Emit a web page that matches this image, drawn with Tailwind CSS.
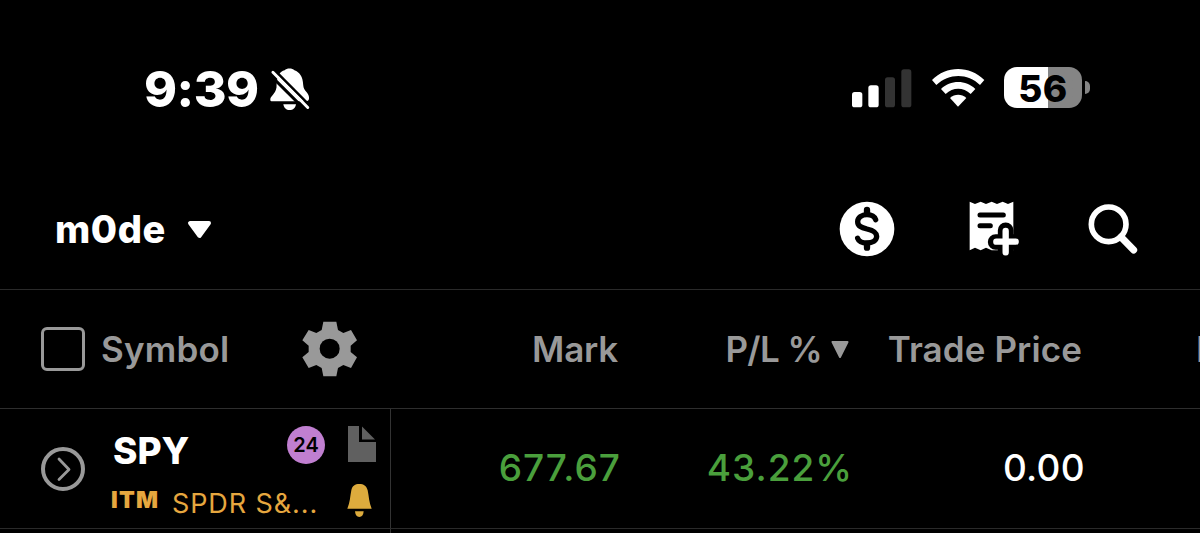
<!DOCTYPE html>
<html lang="en">
<head>
    <meta charset="UTF-8" />
    <meta name="viewport" content="width=device-width, initial-scale=1.0">
    <title>Watchlist</title>
    <script src="https://cdn.jsdelivr.net/npm/@tailwindcss/browser@4"></script>
    <style>
        body { font-family: 'Inter', 'Liberation Sans', sans-serif; }
    </style>
</head>
<body class="bg-black text-white w-[1200px] h-[533px] overflow-hidden">

    <!-- Status Bar -->
    <div class="h-[169px] pt-[9px] pl-[144px] pr-[110px] flex items-center justify-between">
        <div class="flex items-center">
            <span class="w-[125px] text-[50px] leading-none font-extrabold whitespace-nowrap tracking-[-0.5px]">9:39</span>
            <svg class="w-[43px] h-[43px]" viewBox="414 36 132 132" fill="#fff">
                <path d="M418 134C417 122 433 118 437 96C437 60 448 46 462 43C468 36 486 36 492 43C508 49 518 62 519 88C520 108 537 110 537 128C537 135 533 138 528 138H424C420 138 418 137 418 134Z" />
                <path d="M458 147H497C495 158 488 165 477 165C467 165 460 158 458 147Z" />
                <path d="M417 57L530 170" stroke="#000" stroke-width="9" />
                <path d="M431 43L548 160" stroke="#000" stroke-width="8" />
                <path d="M426 49L533 157" stroke="#fff" stroke-width="9" stroke-linecap="round" />
            </svg>
        </div>
        <div class="flex items-center">
            <svg class="w-[60px] h-[39px] mb-[2px] mr-[20px]" viewBox="35 41 180 117">
                <g fill="#fff">
                    <rect x="35" y="110" width="31" height="46" rx="8" />
                    <rect x="84" y="90" width="31" height="66" rx="8" />
                </g>
                <g fill="#333">
                    <rect x="134" y="66" width="30" height="90" rx="8" />
                    <rect x="183" y="42" width="30" height="114" rx="8" />
                </g>
            </svg>
            <svg class="w-[54px] h-[40px] mb-[3px] mr-[18px]" viewBox="275 38 162 120" fill="#fff">
                <path d="M275 74C318 30 388 30 432 74L419 89C382 53 326 53 288 89Z" />
                <path d="M302 101C330 73 377 73 405 101L391 116C369 95 338 95 316 116Z" />
                <path d="M329 128C343 115 364 115 378 128L353 154Z" />
            </svg>
            <div class="flex items-center">
                <div class="w-[78px] h-[41px] mb-[3px] pt-[1px] rounded-[13px] bg-linear-to-r from-white from-[56%] to-[#858585] to-[56%] text-black text-[37px] leading-none font-extrabold tracking-[0.5px] flex items-center justify-center">56</div>
                <div class="w-[5px] h-[13px] ml-[3px] mb-[3px] rounded-r-full bg-[#858585]"></div>
            </div>
        </div>
    </div>

    <!-- Account Header -->
    <header class="h-[121px] border-b border-[#2a2a2a] pl-[55px] pr-[62px] flex items-center justify-between">
        <div class="flex items-center">
            <span class="w-[132px] text-[38px] leading-none font-extrabold whitespace-nowrap tracking-[0.6px]">m0de</span>
            <svg class="w-[25px] h-[19px]" viewBox="0 0 25 19" fill="#fff" stroke="#fff" stroke-width="4" stroke-linejoin="round"><path d="M3 3H22L12.5 16Z" /></svg>
        </div>
        <div class="flex items-center">
            <svg class="w-[56px] h-[56px] mr-[74px]" viewBox="58 34 168 168" fill="none" stroke="#000" stroke-linecap="round">
                <circle cx="142" cy="118" r="82" fill="#fff" stroke="none" />
                <path stroke-width="16" d="M168 90C164 79 154 75 142 75C126 75 114 84 114 96C114 110 126 114 142 118C160 122 171 127 171 140C171 153 158 160 142 160C128 160 117 154 114 146" />
                <path stroke-width="19" d="M142 61V72M142 163V174" />
            </svg>
            <svg class="w-[51px] h-[56px] mr-[68px]" viewBox="448 34 153 168">
                <path fill="#fff" d="M450 36L466 43L483 36L499 43L516 36L532 43L549 36L565 43L581 36V182H516L499 174L483 182L466 174L450 182Z" />
                <path stroke="#000" stroke-width="15" stroke-linecap="round" d="M481 76H551M481 108H512" />
                <path stroke="#000" stroke-width="47" stroke-linecap="round" d="M558 122V190M528 157H590" />
                <path stroke="#fff" stroke-width="19" stroke-linecap="round" d="M558 124V188M530 156H588" />
            </svg>
            <svg class="w-[50px] h-[50px]" viewBox="805 41 150 150" fill="none" stroke="#fff" stroke-linecap="round">
                <circle cx="867" cy="102" r="52" stroke-width="17" />
                <path stroke-width="21" d="M904 140L942 179" />
            </svg>
        </div>
    </header>

    <!-- Column Headings -->
    <div class="h-[119px] border-b border-[#2e2e2e] flex items-center text-[35px] leading-none font-semibold text-[#999] whitespace-nowrap overflow-hidden">
        <div class="w-[390px] pl-[41px] flex items-center shrink-0">
            <div class="w-[44px] h-[44px] border-[3px] border-[#999] rounded-[6px]"></div>
            <span class="w-[201px] ml-[16px] pt-[1px] tracking-[0.2px]">Symbol</span>
            <svg class="w-[56px] h-[56px]" viewBox="907 124 168 168">
                <path fill="#999" d="M971 126H1010L1015 151L1031 160L1054 151L1072 182L1053 198V217L1072 233L1054 265L1031 256L1015 265L1010 290H971L966 265L950 256L927 265L908 233L927 217V198L908 182L927 151L950 160L966 151Z" />
                <circle cx="990" cy="207" r="30" fill="#000" />
            </svg>
        </div>
        <div class="w-[228px] text-right tracking-[-0.2px] shrink-0">Mark</div>
        <div class="w-[231px] flex items-center justify-end shrink-0">
            <span class="tracking-[-0.6px]">P/L %</span>
            <svg class="w-[18px] h-[19px] ml-[9px]" viewBox="0 0 18 19" fill="#999" stroke="#999" stroke-width="2" stroke-linejoin="round"><path d="M1.500 2H16.500L9 17Z" /></svg>
        </div>
        <div class="w-[233px] text-right tracking-[0.1px] shrink-0">Trade Price</div>
        <div class="ml-[114px] w-[4px] overflow-hidden shrink-0">P/L Open</div>
    </div>

    <!-- SPY Row -->
    <div class="h-[120px] border-b border-[#2a2a2a] flex text-[37px] leading-none font-medium whitespace-nowrap">
        <div class="w-[391px] border-r border-[#333] pl-[41px] flex items-center shrink-0">
            <svg class="w-[44px] h-[44px]" viewBox="0 0 44 44" fill="none" stroke="#999">
                <circle cx="22" cy="22" r="20" stroke-width="4" />
                <path stroke-width="2.800" stroke-linecap="round" stroke-linejoin="round" d="M18 12L28 22.500L18 32.500" />
            </svg>
            <div class="ml-[26px] pt-[7px] w-[279px] flex flex-col">
                <div class="h-[58px] flex items-center">
                    <span class="w-[174px] ml-[2px] pt-[7px] text-[37px] font-extrabold">SPY</span>
                    <div class="w-[38px] h-[38px] mb-[4px] rounded-full bg-[#c07fd0] text-black text-[20px] font-semibold flex items-center justify-center">24</div>
                    <svg class="w-[28px] h-[36px] ml-[23px] mb-[7px]" viewBox="0 0 28 36" fill="#606060">
                        <path d="M0 0H11V16H28V36H0Z" />
                        <path d="M14 0.500L27 13.500H14Z" />
                    </svg>
                </div>
                <div class="h-[50px] flex items-center text-[#e6a73f]">
                    <span class="w-[61px] pb-[1px] text-[23px] font-black tracking-[1.2px]">ITM</span>
                    <span class="w-[175px] pt-[5px] text-[27px] font-normal tracking-[0.9px]">SPDR S&amp;...</span>
                    <svg class="w-[25px] h-[34px]" viewBox="443 252 75 102" fill="#ddab3d">
                        <path d="M444 326C452 308 452 291 456 271C459 257 467 252 480 252C493 252 501 257 505 271C509 291 509 308 517 326Z" />
                        <path d="M467 334H493C492 345 488 351 480 351C472 351 468 345 467 334Z" />
                    </svg>
                </div>
            </div>
        </div>
        <div class="w-[230px] pb-[2px] flex items-center justify-end text-[#4a9f3c] tracking-[1px] shrink-0">677.67</div>
        <div class="w-[232px] pb-[2px] flex items-center justify-end text-[#4a9f3c] tracking-[1px] shrink-0">43.22%</div>
        <div class="w-[232px] pb-[2px] flex items-center justify-end tracking-[0.3px] shrink-0">0.00</div>
    </div>

    <!-- Next Row -->
    <div class="h-[120px] flex">
        <div class="w-[391px] border-r border-[#333] shrink-0"></div>
    </div>

</body>
</html>
